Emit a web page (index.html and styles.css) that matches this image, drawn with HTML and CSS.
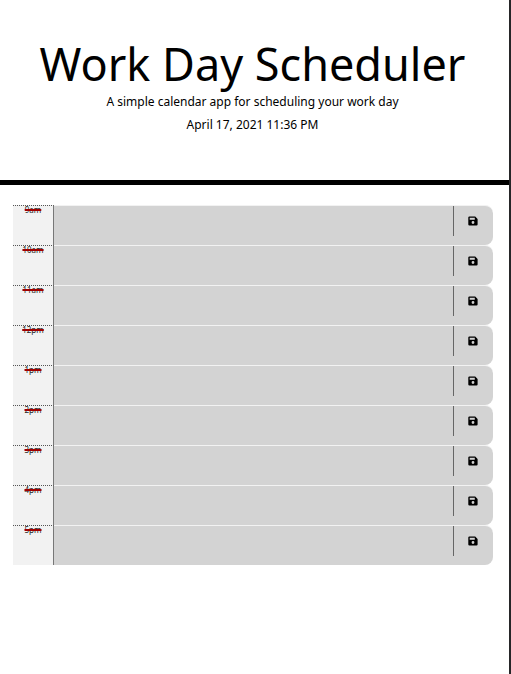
FILE: index.html
```
<!DOCTYPE html>
<html lang="en">
<head>
<meta charset="utf-8">
<title>Work Day Scheduler</title>
<link rel="stylesheet" href="styles.css">
</head>
<body>
<svg class="sprite" aria-hidden="true">
  <symbol id="save" viewBox="0 0 10 10">
    <path fill-rule="evenodd" d="M1.4 0.5H7.2L9.6 2.9V8.4Q9.6 9.5 8.5 9.5H1.4Q0.3 9.5 0.3 8.4V1.6Q0.3 0.5 1.4 0.5ZM1.7 1.8V3.8H6.8V1.8ZM5 5.1A1.4 1.4 0 1 0 5 7.9A1.4 1.4 0 1 0 5 5.1Z"/>
  </symbol>
</svg>
<header class="header">
  <h1 class="title">Work Day Scheduler</h1>
  <p class="lead">A simple calendar app for scheduling your work day</p>
  <p class="lead">April 17, 2021 11:36 PM</p>
</header>
<main class="schedule" id="schedule"></main>
<script src="script.js"></script>
</body>
</html>
```
FILE: styles.css
```
* {
  box-sizing: border-box;
}

.sprite {
  display: none;
}

body {
  margin: 0;
  min-height: 100vh;
  border-right: 2px solid #262628;
  background: #fff;
  color: #000;
  font-family: "Noto Sans", "Open Sans", sans-serif;
  font-size: 12px;
}

.header {
  padding: 40px 12px 44px 8px;
  border-bottom: 5px solid #000;
  text-align: center;
}

.title {
  margin: 0 0 2px;
  font-size: 45px;
  font-weight: 400;
  line-height: 48px;
}

.lead {
  margin: 0;
  line-height: 23px;
}

.schedule {
  padding: 20px 16px 0 13px;
}

.row {
  display: grid;
  grid-template-columns: 41px 1fr 40px;
  height: 40px;
}

.hour {
  border-top: 1px dotted #555;
  border-right: 1px solid #777;
  background: #f2f2f2;
  color: #222;
  font-size: 8px;
  line-height: 8px;
  text-align: center;
  text-decoration: line-through 2px #a00000;
}

.entry {
  width: 100%;
  height: 40px;
  margin: 0;
  padding: 4px;
  border: 0;
  border-top: 1px solid #f2f2f2;
  border-radius: 0;
  background: #d3d3d3;
  font: inherit;
  resize: none;
}

.save {
  display: flex;
  align-items: flex-start;
  margin: 0;
  padding: 0;
  border: 0;
  border-top: 1px solid #f2f2f2;
  border-radius: 0 8px 8px 0;
  background: #d3d3d3;
}

.save-icon {
  display: flex;
  flex: 1;
  align-items: center;
  justify-content: center;
  height: 30px;
  padding-right: 2px;
  border-left: 1px solid #666;
}

.save-icon svg {
  width: 10px;
  height: 10px;
}
```
FILE: script.js
```
const hours = ["9am", "10am", "11am", "12pm", "1pm", "2pm", "3pm", "4pm", "5pm"];

document.getElementById("schedule").innerHTML = hours.map((hour) => `
  <div class="row">
    <label class="hour" for="entry-${hour}">${hour}</label>
    <textarea class="entry" id="entry-${hour}"></textarea>
    <button class="save" type="button" aria-label="Save ${hour}">
      <span class="save-icon"><svg aria-hidden="true"><use href="#save"/></svg></span>
    </button>
  </div>`).join("");
```
